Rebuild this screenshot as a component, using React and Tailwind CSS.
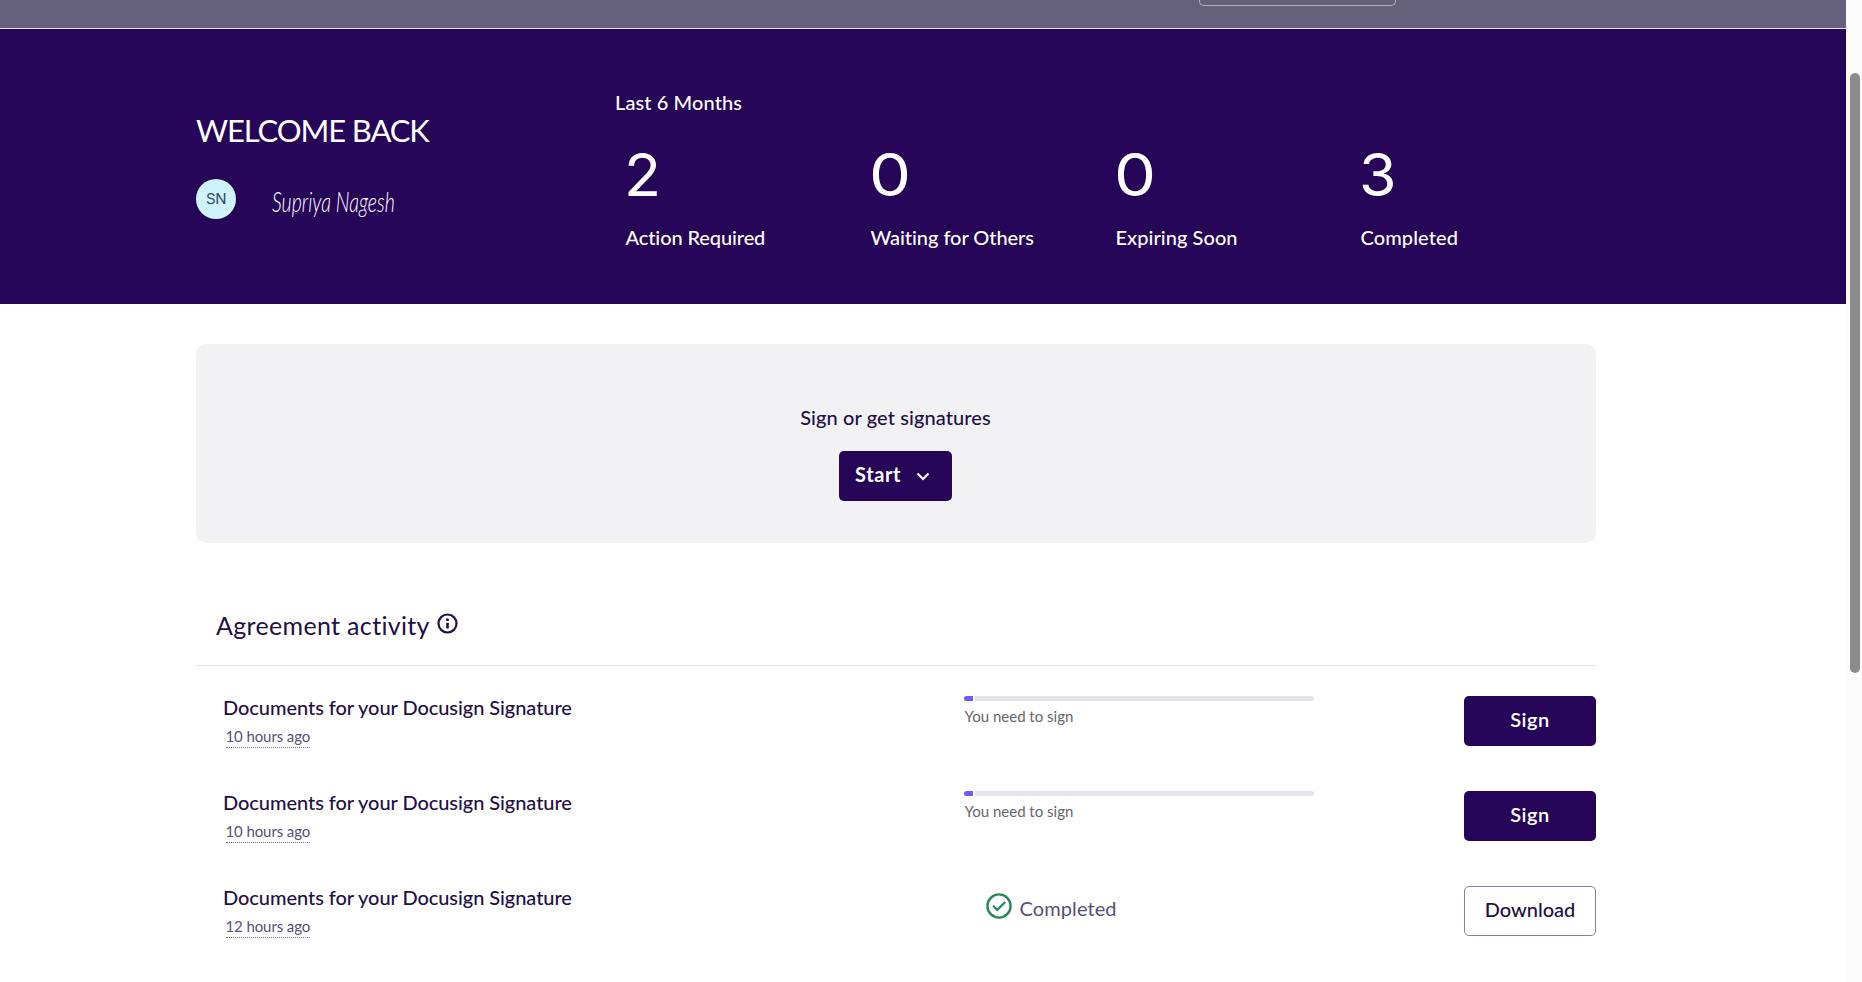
import React from "react";

const stats = [
  { value: 2, label: "Action Required", spacing: "tracking-[-0.1px]" },
  { value: 0, label: "Waiting for Others", spacing: "tracking-[-0.05px]" },
  { value: 0, label: "Expiring Soon", spacing: "tracking-[0.05px]" },
  { value: 3, label: "Completed", spacing: "tracking-[0.1px]" },
];

const agreements = [
  { id: 1, title: "Documents for your Docusign Signature", time: "10 hours ago", status: "sign" },
  { id: 2, title: "Documents for your Docusign Signature", time: "10 hours ago", status: "sign" },
  { id: 3, title: "Documents for your Docusign Signature", time: "12 hours ago", status: "completed" },
];

const InfoIcon = () => (
  <svg className="w-[21px] h-[21px]" viewBox="0 0 21 21" fill="none">
    <circle cx="10.5" cy="10.5" r="9" stroke="currentColor" strokeWidth="2.2" />
    <path d="M10.5 5.5v2.4M10.5 9.7v5.8" stroke="currentColor" strokeWidth="2.6" />
  </svg>
);

const CheckIcon = () => (
  <svg className="w-[26px] h-[26px] text-[#24875a]" viewBox="0 0 26 26" fill="none" stroke="currentColor">
    <circle cx="13" cy="13" r="11.6" strokeWidth="2.4" />
    <path d="M7.2 12.8l4 4.2 8-8" strokeWidth="2.2" />
  </svg>
);

const Stat = ({ stat }) => (
  <div className="w-[245px] pl-2.5">
    <p
      className={`-ml-px w-fit origin-left font-['Inter',sans-serif] text-[59px] leading-[75px] ${
        stat.value === 0 ? "scale-x-[1.13]" : "scale-x-[1.03]"
      }`}
    >
      {stat.value}
    </p>
    <p className={`mt-[13px] ml-[0.5px] text-xl leading-6 font-medium whitespace-nowrap ${stat.spacing}`}>
      {stat.label}
    </p>
  </div>
);

const Hero = () => (
  <section className="h-[275px] bg-[#260559] text-white flex pl-[196px]">
    <div className="w-[419px] pt-[83px]">
      <h1 className="text-[31px] leading-9 tracking-[-1.1px] whitespace-nowrap">WELCOME BACK</h1>
      <div className="mt-[31px] flex items-center">
        <div className="w-10 h-10 rounded-full bg-[#cff3fb] text-[#2b4a66] flex items-center justify-center font-['Inter',sans-serif] text-[15px] tracking-[-0.4px]">
          SN
        </div>
        <span className="ml-9 mt-1 font-light italic text-[28px] leading-8 whitespace-nowrap origin-left scale-x-[0.7]">
          Supriya Nagesh
        </span>
      </div>
    </div>
    <div className="pt-[61px]">
      <p className="text-xl leading-6 font-medium tracking-[0.1px]">Last 6 Months</p>
      <div className="mt-[23px] flex">
        {stats.map((stat) => (
          <Stat key={stat.label} stat={stat} />
        ))}
      </div>
    </div>
  </section>
);

const AgreementRow = ({ agreement }) => {
  const { title, time, status } = agreement;
  const done = status === "completed";

  return (
    <li className="h-[95px] flex">
      <div className="w-[768px] pl-[27px] -mt-px">
        <p className="text-xl leading-6 font-medium tracking-[-0.06px] whitespace-nowrap">{title}</p>
        <span className="block w-fit ml-[2.5px] mt-2 pb-0.5 text-[15px] leading-[18px] tracking-[-0.1px] text-[#574f78] border-b border-dotted border-[#777]">
          {time}
        </span>
      </div>

      {done ? (
        <div className="w-[500px] pl-[22px] pt-[7px] flex items-start">
          <CheckIcon />
          <span className="ml-[7.5px] mt-[3px] text-xl leading-6 tracking-[0.1px] text-[#574f78]">Completed</span>
        </div>
      ) : (
        <div className="w-[500px]">
          <div className="w-[350px] h-[5px] flex gap-0.5">
            <div className="w-[9px] rounded-l-full bg-[#7856ff]" />
            <div className="flex-1 rounded-r-full bg-[#e5e4ea]" />
          </div>
          <p className="mt-1.5 ml-[0.5px] text-[15px] leading-[18px] text-[#666]">You need to sign</p>
        </div>
      )}

      {done ? (
        <button className="w-[132px] h-[50px] pb-[5px] rounded-[5px] border border-[#8581a0] bg-white text-xl font-medium">
          Download
        </button>
      ) : (
        <button className="w-[132px] h-[50px] pb-[5px] rounded-[5px] bg-[#260559] text-white text-xl font-semibold tracking-[0.5px]">
          Sign
        </button>
      )}
    </li>
  );
};

export default function App() {
  return (
    <div className="h-[982px] flex overflow-hidden bg-white font-['Lato',sans-serif] text-[#230f46] [font-variant-ligatures:none]">
      <div className="w-[1846px]">
        <div className="h-[29px] pl-[1199px] bg-[#65617d] border-b border-[#e4e3e8]">
          <div className="w-[197px] h-1.5 rounded-b-[5px] border border-t-0 border-[#b5b3c2]" />
        </div>

        <Hero />

        <main className="ml-[196px] w-[1400px]">
          <section className="mt-10 h-[199px] pt-[61px] pr-px rounded-[10px] bg-[#f2f2f4] flex flex-col items-center">
            <p className="text-xl leading-6 font-medium tracking-[0.1px]">Sign or get signatures</p>
            <button className="mt-[22px] w-[113px] h-[50px] pl-4 pb-1 rounded-[5px] bg-[#260559] text-white text-xl font-bold tracking-[0.6px] flex items-center">
              Start
              <svg className="ml-[15px] mt-[5px] w-3.5 h-[9px]" viewBox="0 0 14 9" fill="none" stroke="currentColor" strokeWidth="2.1">
                <path d="M1.5 1.5l5.5 5.5 5.5-5.5" />
              </svg>
            </button>
          </section>

          <div className="mt-[67px] h-14 pl-5 flex items-start border-b border-[#e2e2e5]">
            <h2 className="text-[25px] leading-[30px] tracking-[0.33px] whitespace-nowrap">Agreement activity</h2>
            <span className="ml-[7px] mt-[3px]">
              <InfoIcon />
            </span>
          </div>

          <ul className="pt-[30px]">
            {agreements.map((agreement) => (
              <AgreementRow key={agreement.id} agreement={agreement} />
            ))}
          </ul>
        </main>
      </div>

      <div className="w-4 pl-1 pt-[73px] bg-[#fcfcfc]">
        <div className="w-2.5 h-[600px] rounded-full bg-[#8b8b8b]" />
      </div>
    </div>
  );
}
